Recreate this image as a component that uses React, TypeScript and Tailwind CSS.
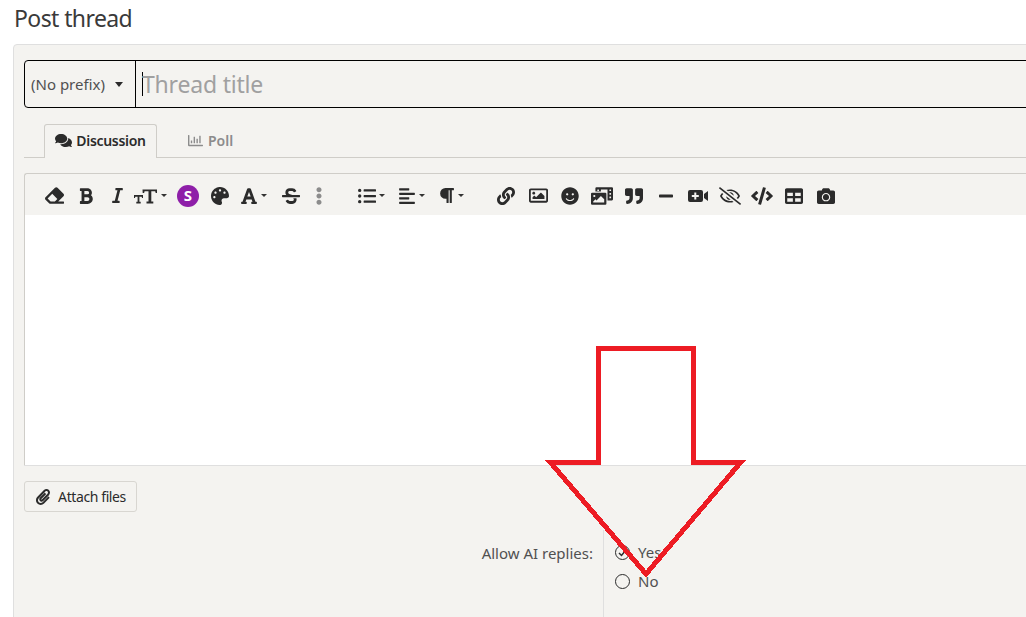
import type { ReactNode } from "react";
import {
  FaAlignLeft,
  FaCamera,
  FaCode,
  FaComments,
  FaEraser,
  FaEllipsisV,
  FaFont,
  FaBold,
  FaItalic,
  FaLink,
  FaListUl,
  FaMinus,
  FaPalette,
  FaParagraph,
  FaPaperclip,
  FaPhotoVideo,
  FaQuoteRight,
  FaRegChartBar,
  FaRegEyeSlash,
  FaRegImage,
  FaSmile,
  FaStrikethrough,
  FaTable,
} from "react-icons/fa";

const font = "font-['Noto_Sans','Open_Sans',sans-serif]";

function Caret() {
  return <span className="ml-[3px] h-0 w-0 border-x-[3px] border-t-[3px] border-x-transparent border-t-[#333]" />;
}

function Btn({ w = "w-[32px]", children }: { w?: string; children: ReactNode }) {
  return <div className={`flex h-full shrink-0 items-center justify-center text-[#2b2b2b] ${w}`}>{children}</div>;
}

function TextSizeIcon() {
  return (
    <svg width="24" height="16" viewBox="0 0 24 16" fill="currentColor">
      <path d="M8.500 1.500h14.500v3.500h-1.300l-.5-1.800h-3.900v10.300h2v1.900h-6.800v-1.900h2V3.200h-3.900l-.5 1.800h-1.400z" />
      <path d="M0 7h9v3H8l-.3-1.300H5.400v5h1.300v1.700H2.300v-1.700h1.300v-5H1.300L1 10H0z" />
    </svg>
  );
}

function VideoPlusIcon() {
  return (
    <svg width="20" height="16" viewBox="0 0 20 16" fill="currentColor">
      <path
        fillRule="evenodd"
        d="M2 2h11a2 2 0 0 1 2 2v8a2 2 0 0 1-2 2H2a2 2 0 0 1-2-2V4a2 2 0 0 1 2-2zm4.300 2.500v2.500H3.800v2h2.500v2.500h2V9h2.500V7H8.300V4.500z"
      />
      <path d="M16 6l4-3v10l-4-3z" />
    </svg>
  );
}

function Toolbar() {
  return (
    <div className="flex h-[41px] items-center pl-[13px] pt-[2px]">
      <Btn><FaEraser size={19} /></Btn>
      <Btn><FaBold size={18} /></Btn>
      <Btn w="w-[30px]"><FaItalic size={17} /></Btn>
      <Btn w="w-[40px]">
        <div className="flex items-center pr-[4px]">
          <TextSizeIcon />
          <Caret />
        </div>
      </Btn>
      <Btn>
        <div className="flex h-[22px] w-[22px] items-center justify-center rounded-full bg-[#8e1fa8] text-[15px] font-bold text-white">
          S
        </div>
      </Btn>
      <Btn><FaPalette size={18} /></Btn>
      <Btn w="w-[35px]">
        <FaFont size={18} />
        <Caret />
      </Btn>
      <Btn w="w-[40px]"><FaStrikethrough size={18} /></Btn>
      <Btn w="w-[16px]"><FaEllipsisV size={18} className="text-[#8c8c8c]" /></Btn>
      <div className="w-[24px] shrink-0" />
      <Btn w="w-[41px]">
        <FaListUl size={18} />
        <Caret />
      </Btn>
      <Btn w="w-[39px]">
        <FaAlignLeft size={18} />
        <Caret />
      </Btn>
      <Btn w="w-[40px]">
        <FaParagraph size={17} />
        <Caret />
      </Btn>
      <div className="w-[19px] shrink-0" />
      <Btn><FaLink size={18} /></Btn>
      <Btn><FaRegImage size={19} /></Btn>
      <Btn><FaSmile size={18} /></Btn>
      <Btn><FaPhotoVideo size={22} /></Btn>
      <Btn><FaQuoteRight size={18} /></Btn>
      <Btn><FaMinus size={16} /></Btn>
      <Btn><VideoPlusIcon /></Btn>
      <Btn><FaRegEyeSlash size={22} /></Btn>
      <Btn><FaCode size={22} /></Btn>
      <Btn><FaTable size={18} /></Btn>
      <Btn><FaCamera size={18} /></Btn>
    </div>
  );
}

export default function App() {
  return (
    <div className={`relative h-[617px] w-[1026px] overflow-hidden bg-white ${font}`}>
      <h1 className="h-[44px] pl-[14px] pt-[3px] text-[23px] leading-[30px] tracking-[-0.6px] text-[#3a3a3a]">
        Post thread
      </h1>

      <div className="h-[600px] w-[1100px] rounded-tl-[4px] border border-[#dfdfdf] bg-[#f4f3f0] ml-[13px] pl-[10px] pt-[15px]">
        {/* title row */}
        <div className="flex h-[48px] rounded-l-[4px] border border-black">
          <div className="flex w-[111px] shrink-0 items-center border-r border-black pl-[6px] text-[15px] text-[#505050]">
            (No prefix)
            <span className="ml-[10px] h-0 w-0 border-x-[4.5px] border-t-[5px] border-x-transparent border-t-[#2b2b2b]" />
          </div>
          <div className="flex flex-1 items-center pl-[6px] text-[23px] tracking-[-0.2px] text-[#a0a0a0]">
            <span className="mr-[-1px] h-[24px] w-px bg-black" />
            Thread title
          </div>
        </div>

        {/* tabs */}
        <div className="mt-[16px] flex h-[34px] items-stretch border-b border-[#cfcdc8] pl-[20px] text-[14px] font-semibold">
          <div className="-mb-px flex w-[113px] items-center justify-center gap-[4px] rounded-t-[3px] border border-b-0 border-[#cfcdc8] bg-[#f4f3f0] pb-[2px] tracking-[-0.3px] text-[#2b2b2b]">
            <FaComments size={17} />
            Discussion
          </div>
          <div className="ml-[31px] flex items-center gap-[5px] pb-px text-[#8c8c8c]">
            <FaRegChartBar size={15} />
            Poll
          </div>
        </div>

        {/* editor */}
        <div className="mt-[15px] rounded-tl-[3px] border-x border-t border-[#cfcdc8] border-r-0">
          <Toolbar />
          <div className="h-[250px] bg-white" />
        </div>
        <div className="h-px bg-[#dfdfdf]" />

        {/* attach */}
        <div className="mt-[15px] flex h-[31px] w-[113px] items-center justify-center gap-[7px] rounded-[3px] border border-[#d8d6d1] text-[14px] tracking-[-0.4px] text-[#2b2b2b]">
          <FaPaperclip size={16} />
          Attach files
        </div>

        {/* allow ai row */}
        <div className="mt-[18px] -ml-[10px] grid grid-cols-[589px_1fr] text-[15px] text-[#505050]">
          <div className="pr-[10px] pt-[12px] text-right">Allow AI replies:</div>
          <div className="flex h-[87px] flex-col gap-[10px] border-l border-[#dfdfdf] pl-[11px] pt-[13px]">
            <div className="flex h-[19px] items-center gap-[8px]">
              <span className="flex h-[15px] w-[15px] items-center justify-center rounded-full border-[1.5px] border-[#2b2b2b]">
                <svg width="9" height="8" viewBox="0 0 9 8" fill="none" stroke="#2b2b2b" strokeWidth="1.500">
                  <path d="M1 4l2.500 2.500L8 1" />
                </svg>
              </span>
              Yes
            </div>
            <div className="flex h-[19px] items-center gap-[8px]">
              <span className="h-[15px] w-[15px] rounded-full border-[1.5px] border-[#2b2b2b]" />
              No
            </div>
          </div>
        </div>
      </div>

      {/* red annotation arrow */}
      <svg className="absolute left-0 top-0" width="1026" height="617" fill="none">
        <path
          d="M598 348.500H693V462H741L646 574L550 462H598Z"
          stroke="#ed1c24"
          strokeWidth="5"
          strokeLinejoin="miter"
          shapeRendering="crispEdges"
        />
      </svg>
    </div>
  );
}
